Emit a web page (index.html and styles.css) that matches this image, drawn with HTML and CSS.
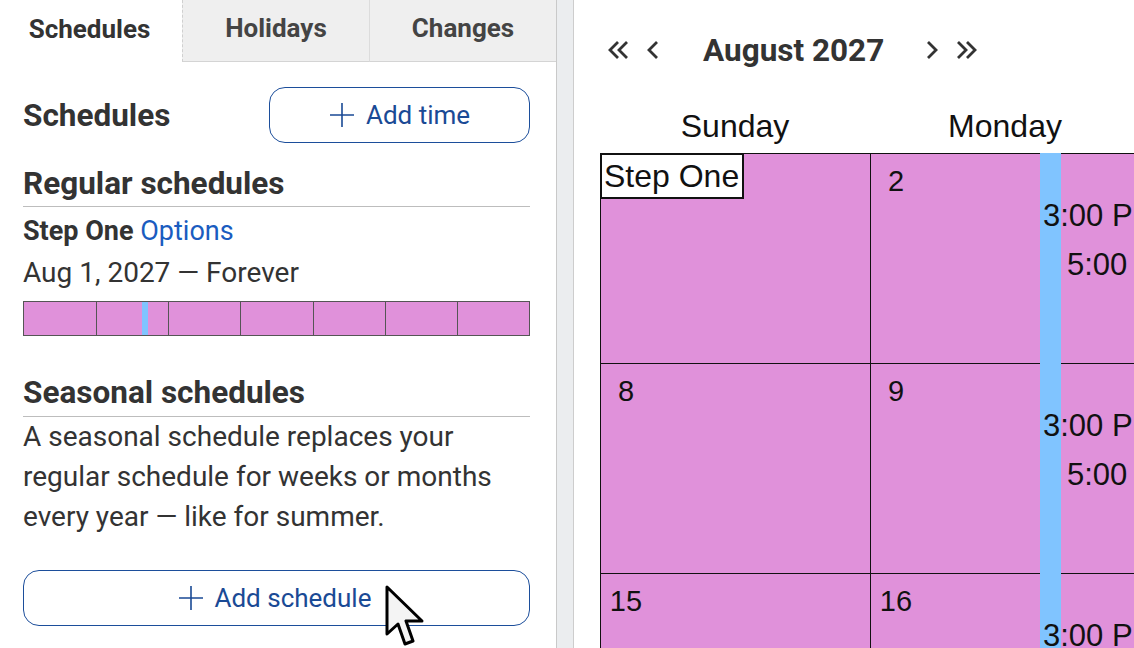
FILE: index.html
```html
<!DOCTYPE html>
<html>
<head>
<meta charset="utf-8">
<link rel="stylesheet" href="styles.css">
</head>
<body>
<div class="app">
  <aside class="left">
    <nav class="tabs">
      <div class="tab active">Schedules</div>
      <div class="tab second">Holidays</div>
      <div class="tab">Changes</div>
    </nav>
    <div class="panel">
      <div class="head-row">
        <h2 class="title">Schedules</h2>
        <button class="btn btn-time"><svg class="plus" viewBox="0 0 26 26"><path d="M13 1V25M1 13H25"/></svg>Add time</button>
      </div>
      <h3 class="sec">Regular schedules</h3>
      <div class="sched-name"><b>Step One</b> <span class="link">Options</span></div>
      <div class="sched-date">Aug 1, 2027 — Forever</div>
      <div class="week-bar">
        <div class="day"></div>
        <div class="day"><span class="slot"></span></div>
        <div class="day"></div>
        <div class="day"></div>
        <div class="day"></div>
        <div class="day"></div>
        <div class="day"></div>
      </div>
      <h3 class="sec sec2">Seasonal schedules</h3>
      <p class="desc">A seasonal schedule replaces your regular schedule for weeks or months every year — like for summer.</p>
      <button class="btn btn-wide"><svg class="plus" viewBox="0 0 26 26"><path d="M13 1V25M1 13H25"/></svg>Add schedule</button>
    </div>
  </aside>
  <div class="splitter"></div>
  <main class="right">
    <div class="cal-nav">
      <svg class="chev dbl" viewBox="0 0 22 20"><path d="M10 2L2 10L10 18M19 2L11 10L19 18"/></svg>
      <svg class="chev sgl" viewBox="0 0 12 20"><path d="M10 2L2 10L10 18"/></svg>
      <div class="month">August 2027</div>
      <svg class="chev sgl r1" viewBox="0 0 12 20"><path d="M2 2L10 10L2 18"/></svg>
      <svg class="chev dbl r2" viewBox="0 0 22 20"><path d="M3 2L11 10L3 18M12 2L20 10L12 18"/></svg>
    </div>
    <div class="dow">
      <div>Sunday</div><div>Monday</div><div>Tuesday</div><div>Wednesday</div><div>Thursday</div><div>Friday</div><div>Saturday</div>
    </div>
    <div class="grid">
      <div class="cell"><div class="label">Step One</div></div>
      <div class="cell mon"><div class="num">2</div><span class="stripe"></span><div class="t1">3:00 PM</div><div class="t2">5:00 PM</div></div>
      <div class="cell"><div class="num">3</div></div>
      <div class="cell"><div class="num">4</div></div>
      <div class="cell"><div class="num">5</div></div>
      <div class="cell"><div class="num">6</div></div>
      <div class="cell"><div class="num">7</div></div>
      <div class="cell"><div class="num">8</div></div>
      <div class="cell mon"><div class="num">9</div><span class="stripe"></span><div class="t1">3:00 PM</div><div class="t2">5:00 PM</div></div>
      <div class="cell"><div class="num">10</div></div>
      <div class="cell"><div class="num">11</div></div>
      <div class="cell"><div class="num">12</div></div>
      <div class="cell"><div class="num">13</div></div>
      <div class="cell"><div class="num">14</div></div>
      <div class="cell"><div class="num">15</div></div>
      <div class="cell mon"><div class="num">16</div><span class="stripe"></span><div class="t1">3:00 PM</div><div class="t2">5:00 PM</div></div>
      <div class="cell"><div class="num">17</div></div>
      <div class="cell"><div class="num">18</div></div>
      <div class="cell"><div class="num">19</div></div>
      <div class="cell"><div class="num">20</div></div>
      <div class="cell"><div class="num">21</div></div>
    </div>
  </main>
</div>
<svg class="cursor" viewBox="0 0 40 62"><path d="M2 2L2 49L13 39L20 59L28 56L21 36L37 36Z"/></svg>
</body>
</html>
```
FILE: styles.css
```css
html, body {
  margin: 0;
  padding: 0;
  width: 1134px;
  height: 648px;
  overflow: hidden;
  background: #fff;
}
body {
  font-family: Roboto, "Liberation Sans", sans-serif;
  color: #333;
  position: relative;
}
.app {
  display: flex;
  height: 648px;
}
.left {
  width: 556px;
  flex: none;
}
.tabs {
  display: grid;
  grid-template-columns: 182px 1fr 1fr;
  height: 62px;
}
.tab {
  background: #efefef;
  border-bottom: 1px solid #d4d4d4;
  border-left: 1px solid #dcdcdc;
  font-weight: 700;
  font-size: 26px;
  color: #444;
  display: flex;
  align-items: center;
  justify-content: center;
  box-sizing: border-box;
  padding-bottom: 5px;
}
.tab.active {
  background: #fff;
  border: none;
  color: #333;
  padding-right: 3px;
}
.tab.second {
  border-left: 1px dashed #d0d0d0;
}
.panel {
  padding: 0 26px 0 23px;
}
.head-row {
  display: flex;
  justify-content: space-between;
  align-items: center;
  margin-top: 25px;
}
.title {
  margin: 0;
  font-size: 31.5px;
  font-weight: 700;
}
.btn {
  display: flex;
  align-items: center;
  justify-content: center;
  gap: 11px;
  height: 56px;
  border: 1px solid #1c4e9b;
  border-radius: 16px;
  background: #fff;
  color: #1a4a95;
  font-family: Roboto, "Liberation Sans", sans-serif;
  font-size: 26px;
  padding: 0;
  box-sizing: border-box;
}
.btn-time {
  width: 261px;
}
.btn-wide {
  width: 100%;
  margin-top: 33px;
  padding-right: 4px;
}
.plus {
  width: 26px;
  height: 26px;
  fill: none;
  stroke: #1a4a95;
  stroke-width: 1.6;
}
.sec {
  margin: 24px 0 0;
  font-size: 31.5px;
  font-weight: 700;
  line-height: 34px;
  padding-bottom: 5px;
  border-bottom: 1px solid #bdbdbd;
}
.sec2 {
  margin-top: 40px;
  padding-bottom: 6px;
}
.sched-name {
  margin-top: 3px;
  font-size: 27px;
  line-height: 42px;
}
.link {
  color: #1a5cc0;
}
.sched-date {
  font-size: 28px;
  line-height: 42px;
}
.week-bar {
  margin-top: 7px;
  display: grid;
  grid-template-columns: repeat(7, 1fr);
  height: 35px;
  border: 1px solid #555;
  box-sizing: border-box;
  background: #e091da;
}
.day {
  border-left: 1px solid #555;
  position: relative;
}
.day:first-child {
  border-left: none;
}
.slot {
  position: absolute;
  top: 0;
  bottom: 0;
  left: 62.5%;
  width: 6px;
  background: #80c4ff;
}
.desc {
  margin: 0;
  font-size: 28px;
  line-height: 40px;
  color: #333;
}
.splitter {
  width: 18px;
  flex: none;
  background: #ebedef;
  border-left: 1px solid #c9c9c9;
  border-right: 1px solid #cdcdcd;
  box-sizing: border-box;
}
.right {
  flex: 1;
  min-width: 0;
  overflow: hidden;
  padding-left: 26px;
}
.cal-nav {
  height: 100px;
  display: flex;
  align-items: center;
  padding-left: 8px;
}
.chev {
  fill: none;
  stroke: #333;
  stroke-width: 2.8;
  height: 20px;
  flex: none;
}
.chev.dbl { width: 22px; }
.chev.sgl { width: 12px; margin-left: 17px; }
.chev.r1 { margin-left: 42px; }
.chev.r2 { margin-left: 17px; }
.month {
  margin-left: 44px;
  font-size: 31.5px;
  font-weight: 700;
  color: #333;
}
.dow {
  display: grid;
  grid-template-columns: repeat(7, 270px);
  height: 53px;
  align-items: center;
  font-family: "Liberation Sans", Arial, sans-serif;
  font-size: 32px;
  color: #111;
  text-align: center;
  width: 1890px;
}
.grid {
  display: grid;
  grid-template-columns: repeat(7, 270px);
  grid-auto-rows: 210px;
  border-top: 1px solid #111;
  border-left: 1px solid #111;
  width: 1891px;
  font-family: "Liberation Sans", Arial, sans-serif;
  color: #111;
}
.cell {
  position: relative;
  background: #e091da;
  border-right: 1px solid #111;
  border-bottom: 1px solid #111;
}
.num {
  width: 52px;
  text-align: center;
  font-size: 29px;
  line-height: 34px;
  margin-top: 10px;
  margin-left: -1px;
}
.label {
  position: absolute;
  left: -1px;
  top: -1px;
  background: #fff;
  border: 2px solid #111;
  font-size: 32px;
  line-height: 42px;
  padding: 0 3px 0 2px;
}
.stripe {
  position: absolute;
  left: 169px;
  width: 21px;
  top: -1px;
  bottom: -1px;
  background: #80c4ff;
}
.t1, .t2 {
  position: relative;
  font-size: 31px;
  line-height: 34px;
  white-space: nowrap;
}
.t1 {
  margin-top: 1px;
  padding-left: 172px;
}
.t2 {
  margin-top: 15px;
  padding-left: 196px;
}
.cursor {
  position: absolute;
  left: 385px;
  top: 585px;
  width: 40px;
  height: 62px;
  fill: #f4f4f4;
  stroke: #000;
  stroke-width: 3;
  stroke-linejoin: round;
}
```
